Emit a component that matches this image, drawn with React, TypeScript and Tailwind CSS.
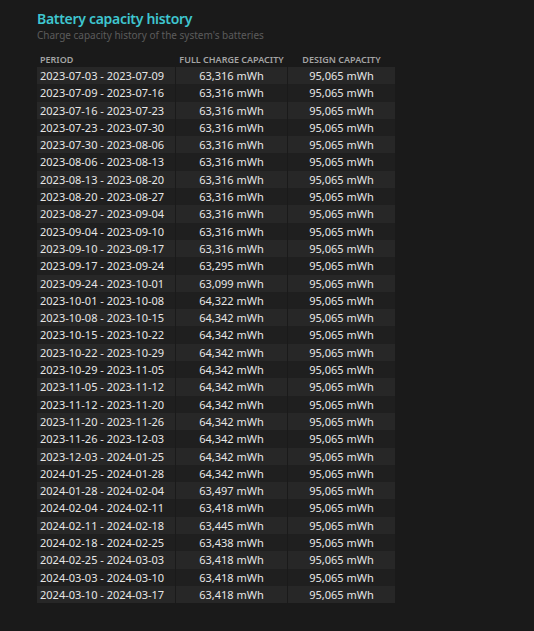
import React from "react";

const rows: [string, string][] = [
  ["2023-07-03 - 2023-07-09", "63,316"],
  ["2023-07-09 - 2023-07-16", "63,316"],
  ["2023-07-16 - 2023-07-23", "63,316"],
  ["2023-07-23 - 2023-07-30", "63,316"],
  ["2023-07-30 - 2023-08-06", "63,316"],
  ["2023-08-06 - 2023-08-13", "63,316"],
  ["2023-08-13 - 2023-08-20", "63,316"],
  ["2023-08-20 - 2023-08-27", "63,316"],
  ["2023-08-27 - 2023-09-04", "63,316"],
  ["2023-09-04 - 2023-09-10", "63,316"],
  ["2023-09-10 - 2023-09-17", "63,316"],
  ["2023-09-17 - 2023-09-24", "63,295"],
  ["2023-09-24 - 2023-10-01", "63,099"],
  ["2023-10-01 - 2023-10-08", "64,322"],
  ["2023-10-08 - 2023-10-15", "64,342"],
  ["2023-10-15 - 2023-10-22", "64,342"],
  ["2023-10-22 - 2023-10-29", "64,342"],
  ["2023-10-29 - 2023-11-05", "64,342"],
  ["2023-11-05 - 2023-11-12", "64,342"],
  ["2023-11-12 - 2023-11-20", "64,342"],
  ["2023-11-20 - 2023-11-26", "64,342"],
  ["2023-11-26 - 2023-12-03", "64,342"],
  ["2023-12-03 - 2024-01-25", "64,342"],
  ["2024-01-25 - 2024-01-28", "64,342"],
  ["2024-01-28 - 2024-02-04", "63,497"],
  ["2024-02-04 - 2024-02-11", "63,418"],
  ["2024-02-11 - 2024-02-18", "63,445"],
  ["2024-02-18 - 2024-02-25", "63,438"],
  ["2024-02-25 - 2024-03-03", "63,418"],
  ["2024-03-03 - 2024-03-10", "63,418"],
  ["2024-03-10 - 2024-03-17", "63,418"],
];

export default function App() {
  return (
    <div
      className="w-[534px] h-[631px] bg-[#1a1a1a] pl-[37px] pt-[9px]"
      style={{ fontFamily: '"Noto Sans", "Open Sans", sans-serif' }}
    >
      <h1 className="text-[14px] leading-[19px] tracking-[-0.3px] font-semibold text-[#3fc6d0]">
        Battery capacity history
      </h1>
      <p className="text-[10px] leading-[14px] text-[#5c5c5c]">
        Charge capacity history of the system's batteries
      </p>
      <table className="mt-[11px] border-separate border-spacing-x-px border-spacing-y-0 -ml-px">
        <thead>
          <tr className="h-[14px] leading-[14px] text-[9px] font-semibold text-[#a4a4a4] uppercase">
            <th className="w-[138px] p-0 text-left pl-[3px] font-semibold">Period</th>
            <th className="w-[111px] p-0 text-center font-semibold">Full charge capacity</th>
            <th className="w-[107px] p-0 text-center font-semibold">Design capacity</th>
          </tr>
        </thead>
        <tbody className="text-[11px] text-[#e6e6e6]">
          {rows.map(([p, c], i) => (
            <tr key={p} className="h-[17.3px] leading-[17.3px]">
              <td className={`pl-[3px] p-0 whitespace-nowrap ${i % 2 === 0 ? "bg-[#272727]" : "bg-[#1f1f1f]"}`}>{p}</td>
              <td className={`text-center p-0 whitespace-nowrap ${i % 2 === 0 ? "bg-[#272727]" : "bg-[#1f1f1f]"}`}>{c} mWh</td>
              <td className={`text-center p-0 whitespace-nowrap ${i % 2 === 0 ? "bg-[#272727]" : "bg-[#1f1f1f]"}`}>95,065 mWh</td>
            </tr>
          ))}
        </tbody>
      </table>
    </div>
  );
}
